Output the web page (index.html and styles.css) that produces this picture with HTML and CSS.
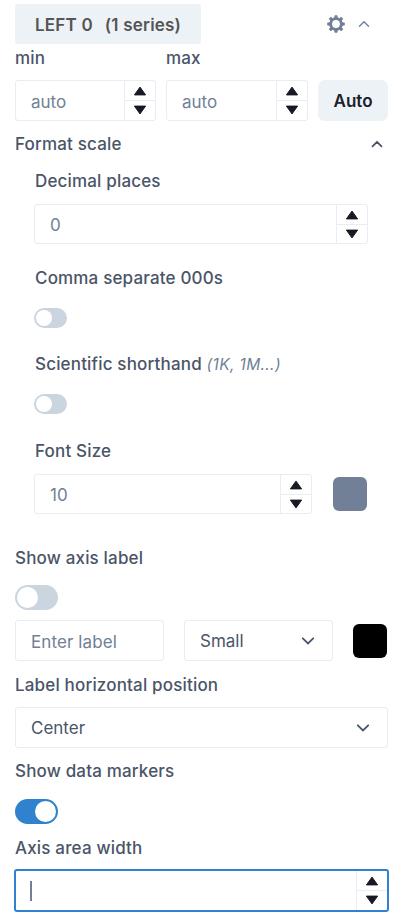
FILE: index.html
```html
<!DOCTYPE html>
<html lang="en">
<head>
<meta charset="utf-8">
<title>Axis settings</title>
<link rel="stylesheet" href="styles.css">
</head>
<body>
<svg class="defs" width="0" height="0" aria-hidden="true">
  <symbol id="up" viewBox="0 0 14 10"><path d="M7 1.100 12.600 8.900H1.400Z" fill="#171923" stroke="#171923" stroke-width="1" stroke-linejoin="round"/></symbol>
  <symbol id="down" viewBox="0 0 14 10"><path d="M7 8.900 12.600 1.100H1.400Z" fill="#171923" stroke="#171923" stroke-width="1" stroke-linejoin="round"/></symbol>
  <symbol id="chev-up" viewBox="0 0 12 8"><path d="M1.500 6.300 6 1.800 10.500 6.300" fill="none" stroke="currentColor" stroke-linecap="round" stroke-linejoin="round"/></symbol>
  <symbol id="chev-down" viewBox="0 0 14 10"><path d="M1.800 2.300 7 7.500 12.200 2.300" fill="none" stroke="currentColor" stroke-linecap="round" stroke-linejoin="miter"/></symbol>
</svg>
<main class="panel">
  <header class="head">
    <div class="tab"><span class="tab-name">LEFT 0</span><span class="tab-count">(1 series)</span></div>
    <svg class="gear" viewBox="-9 -9 18 18" aria-hidden="true">
      <circle r="5.300" fill="none" stroke="#718096" stroke-width="2.800"/>
      <g fill="#718096">
        <path id="tooth" d="M-1.900-5.900-1.300-8.800H1.300L1.900-5.900Z"/>
        <use href="#tooth" transform="rotate(45)"/><use href="#tooth" transform="rotate(90)"/>
        <use href="#tooth" transform="rotate(135)"/><use href="#tooth" transform="rotate(180)"/>
        <use href="#tooth" transform="rotate(225)"/><use href="#tooth" transform="rotate(270)"/>
        <use href="#tooth" transform="rotate(315)"/>
      </g>
    </svg>
    <svg class="chev-up light"><use href="#chev-up"/></svg>
  </header>

  <section class="range">
    <div class="range-col">
      <div class="label">min</div>
      <div class="field"><span class="hint">auto</span><div class="stepper"><svg><use href="#up"/></svg><svg><use href="#down"/></svg></div></div>
    </div>
    <div class="range-col">
      <div class="label">max</div>
      <div class="field"><span class="hint">auto</span><div class="stepper"><svg><use href="#up"/></svg><svg><use href="#down"/></svg></div></div>
    </div>
    <div class="auto">Auto</div>
  </section>

  <div class="label format"><span>Format scale</span><svg class="chev-up"><use href="#chev-up"/></svg></div>

  <section class="nested">
    <div class="label">Decimal places</div>
    <div class="field"><span class="hint">0</span><div class="stepper"><svg><use href="#up"/></svg><svg><use href="#down"/></svg></div></div>
    <div class="label comma">Comma separate 000s</div>
    <div class="toggle small"></div>
    <div class="label sci">Scientific shorthand <em>(1K, 1M...)</em></div>
    <div class="toggle small"></div>
    <div class="label size">Font Size</div>
    <div class="size-row">
      <div class="field"><span class="hint">10</span><div class="stepper"><svg><use href="#up"/></svg><svg><use href="#down"/></svg></div></div>
      <div class="swatch gray"></div>
    </div>
  </section>

  <div class="label axis">Show axis label</div>
  <div class="toggle"></div>
  <div class="axis-row">
    <div class="field"><span class="hint">Enter label</span></div>
    <div class="field"><span class="value">Small</span><svg class="chev-down"><use href="#chev-down"/></svg></div>
    <div class="swatch black"></div>
  </div>

  <div class="label position">Label horizontal position</div>
  <div class="field select"><span class="value">Center</span><svg class="chev-down"><use href="#chev-down"/></svg></div>

  <div class="label markers">Show data markers</div>
  <div class="toggle on"></div>

  <div class="label width">Axis area width</div>
  <div class="field focused"><span class="caret"></span><div class="stepper"><svg><use href="#up"/></svg><svg><use href="#down"/></svg></div></div>
</main>
</body>
</html>
```
FILE: styles.css
```css
* { box-sizing: border-box; }
body {
  margin: 0;
  background: #fff;
  color: #4a5568;
  font: 500 17px/24px Inter, "Liberation Sans", sans-serif;
}
svg { display: block; flex: none; }
.defs { position: absolute; }
.panel { padding: 4px 16px 0 15px; }

.head { display: flex; align-items: center; height: 40px; }
.tab {
  width: 186px;
  height: 40px;
  padding: 1px 0 0 20px;
  display: flex;
  align-items: center;
  gap: 12px;
  background: #edf2f7;
  border-radius: 2px;
  color: #555;
  font-weight: 600;
  letter-spacing: 0.2px;
  white-space: nowrap;
}
.gear { width: 18px; height: 18px; margin-left: 126px; }
.chev-up { width: 12px; height: 8px; stroke-width: 1.8; }
.chev-up.light { margin-left: 13px; color: #718096; stroke-width: 1.4; }

.label { height: 24px; letter-spacing: 0.17px; white-space: nowrap; }
.range { display: grid; grid-template-columns: 141px 142px 70px; column-gap: 10px; align-items: end; margin-top: 2px; }
.range .field { margin-top: 10px; height: 41px; }
.auto {
  height: 41px;
  padding-top: 1px;
  border-radius: 7px;
  background: #edf2f7;
  color: #1a202c;
  font-weight: 600;
  line-height: 41px;
  text-align: center;
}

.field {
  display: flex;
  align-items: center;
  justify-content: space-between;
  height: 40px;
  padding-left: 15px;
  border: 1px solid #e8ecf4;
  border-radius: 3px;
  font-weight: 400;
}
.hint { color: #718096; padding-top: 2px; }
.stepper {
  align-self: stretch;
  width: 31px;
  display: grid;
  grid-template-rows: 1fr 1fr;
  border-left: 1px solid #e8ecf4;
  background: linear-gradient(#e8ecf4, #e8ecf4) center / 100% 1px no-repeat;
}
.stepper svg { width: 14px; height: 10px; place-self: center; }
.stepper svg:first-child { margin-top: 1px; }

.format { display: flex; align-items: center; justify-content: space-between; margin-top: 11px; padding-right: 5px; }
.nested { padding: 13px 20px 0 20px; }
.nested > .field { margin: 11px 0 0 -1px; }
.comma { margin-top: 22px; }
.sci { margin-top: 24px; }
.size { margin-top: 25px; }
em { color: #718096; font-size: 15.5px; font-weight: 400; letter-spacing: 0.35px; }
.size-row { display: flex; align-items: center; gap: 21px; margin: 11px 0 0 -1px; }
.size-row .field { width: 278px; }
.swatch { width: 34px; height: 34px; border-radius: 6px; }
.gray { background: #718096; }
.black { background: #000; }

.toggle { display: flex; align-items: center; width: 43px; height: 25px; margin-top: 15px; padding: 0 2px; border-radius: 13px; background: #cbd5e0; }
.toggle::before { content: ""; width: 21px; height: 21px; border-radius: 50%; background: #fff; }
.toggle.small { width: 33px; height: 20px; margin: 18px 0 0 -1px; }
.toggle.small::before { width: 16px; height: 16px; }
.toggle.on { justify-content: flex-end; background: #3182ce; }

.axis { margin-top: 32px; }
.axis-row { display: grid; grid-template-columns: 149px 149px 34px; column-gap: 20px; align-items: center; margin-top: 10px; }
.axis-row .field { height: 41px; }
.chev-down { width: 14px; height: 10px; margin-right: 17px; stroke-width: 1.8; }
.axis-row .hint { letter-spacing: 0.1px; }
.position { margin-top: 12px; }
.select { height: 41px; margin-top: 10px; }
.markers { margin-top: 11px; }
.toggle.on { margin-top: 16px; }
.width { margin-top: 12px; }
.focused { height: 43px; margin: 9px -1px 0; padding-left: 14px; border: 2px solid #3182ce; }
.caret { width: 2px; height: 20px; background: #718096; }
```
